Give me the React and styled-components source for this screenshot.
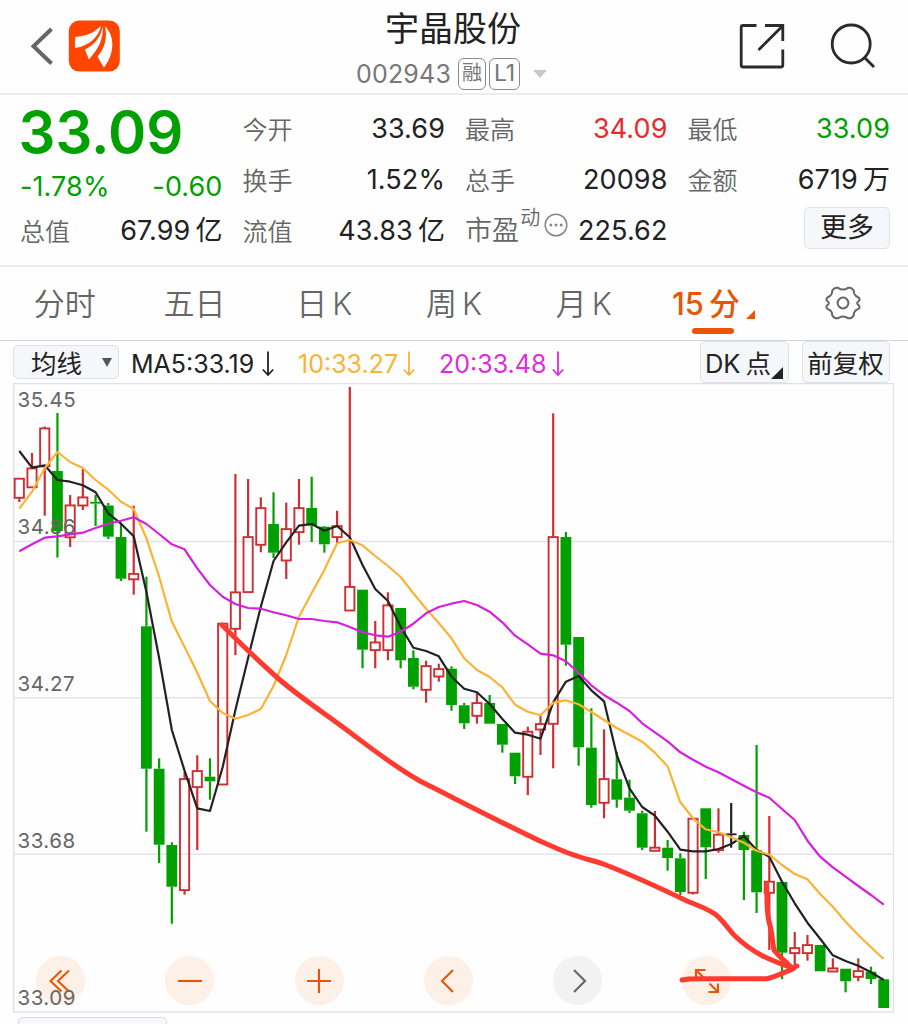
import React from 'react'
import styled, { createGlobalStyle } from 'styled-components'

const GREEN = '#00a000'
const RED = '#e92a2a'
const ORANGE = '#ea5504'
const CANDLE_RED = '#cf2f33'

const GlobalStyle = createGlobalStyle`
  * {
    box-sizing: border-box;
  }
  body {
    margin: 0;
    background: #fefefe;
    font-family: Inter, "Noto Sans CJK SC", sans-serif;
    color: #222;
  }
`

const Page = styled.div`
  width: 908px;
  height: 1024px;
  overflow: hidden;
  display: flex;
  flex-direction: column;
`

const Header = styled.header`
  height: 95px;
  flex: none;
  display: grid;
  grid-template-columns: 260px 1fr 260px;
  border-bottom: 2px solid #ededed;
`

const HeaderSide = styled.div`
  display: flex;
  align-items: flex-start;
  justify-content: ${(p) => (p.$end ? 'flex-end' : 'flex-start')};
  gap: ${(p) => (p.$end ? '43px' : '13px')};
  padding: ${(p) => (p.$end ? '22px 32px 0 0' : '20px 0 0 29px')};
`

const HeaderCenter = styled.div`
  display: flex;
  flex-direction: column;
  align-items: center;
`

const StockName = styled.h1`
  margin: 7px 0 0;
  padding-right: 2px;
  font-size: 34px;
  font-weight: 400;
  line-height: 44px;
  height: 44px;
`

const CodeRow = styled.div`
  display: flex;
  align-items: center;
  gap: 3px;
  height: 45px;
  padding-right: 5px;
  color: #777;
  font-size: 25px;
`

const Code = styled.span`
  letter-spacing: 0.2px;
  margin-right: 4px;
`

const Tag = styled.span`
  width: ${(p) => p.$w}px;
  height: 32px;
  border: 1.5px solid #8a8a8a;
  border-radius: 6px;
  line-height: 29px;
  text-align: center;
  font-size: ${(p) => p.$size}px;
`

const Caret = styled.i`
  margin-left: 10px;
  border: 7.5px solid transparent;
  border-top: 8px solid #c8c8c8;
  border-bottom: 0;
`

const Quote = styled.section`
  height: 172px;
  flex: none;
  display: grid;
  grid-template-columns: repeat(4, 1fr);
  column-gap: 20px;
  padding: 8px 18px 0 20px;
  border-bottom: 2px solid #ededed;
`

const QuoteColumn = styled.div`
  display: flex;
  flex-direction: column;
`

const Cell = styled.div`
  height: ${(p) => p.$h || 51}px;
  display: flex;
  align-items: center;
  justify-content: space-between;
  color: ${(p) => p.$color || '#222'};
  font-size: 27px;
  line-height: 36px;
  letter-spacing: 0.1px;
  white-space: nowrap;
`

const Label = styled.span`
  color: #666;
  font-size: 25px;
  font-weight: 350;
  letter-spacing: 0;
  padding-top: 2px;
`

const Value = styled.span`
  color: ${(p) => p.$color || 'inherit'};
  padding-top: 1px;
`

const Unit = styled.span`
  margin-left: 5px;
`

const Price = styled.div`
  height: 65px;
  margin-left: -1.5px;
  line-height: 59px;
  font-size: 58px;
  font-weight: 600;
  color: ${GREEN};
`

const PeLabel = styled.span`
  display: flex;
  align-items: center;
  color: #666;
  font-size: 27px;
  font-weight: 350;

  svg {
    margin-top: -12px;
  }
`

const Sup = styled.span`
  font-size: 20px;
  margin: -26px 4px 0 1px;
`

const MoreButton = styled.button`
  width: 86px;
  height: 42px;
  margin: -6px 0 0 auto;
  padding: 0;
  border: 1.5px solid #dfe1e6;
  border-radius: 5px;
  background: #f6f7fa;
  font: 400 27px/36px Inter, "Noto Sans CJK SC", sans-serif;
  color: #222;
`

const Tabs = styled.nav`
  height: 74px;
  flex: none;
  display: grid;
  grid-template-columns: repeat(7, 1fr);
  border-bottom: 1.5px solid #d3d4da;
`

const Tab = styled.div`
  display: flex;
  flex-direction: column;
  align-items: center;
  font-size: 31px;
  font-weight: ${(p) => (p.$active ? 450 : 350)};
  color: ${(p) => (p.$active ? ORANGE : '#666')};
`

const TabText = styled.div`
  display: flex;
  gap: 5px;
  height: 61px;
  line-height: 74px;
`

const TabLine = styled.i`
  width: 42px;
  height: 6px;
  border-radius: 3px;
  background: ${ORANGE};
`

const Corner = styled.i`
  align-self: flex-end;
  margin: 0 0 ${(p) => p.$lift}px ${(p) => p.$ml || 0}px;
  border-left: ${(p) => p.$size}px solid transparent;
  border-bottom: ${(p) => p.$size}px solid ${(p) => p.$color};
`

const Indicators = styled.div`
  height: 42px;
  flex: none;
  display: flex;
  align-items: center;
  padding: 0 18px 0 13px;
  font-size: 25px;
`

const Box = styled.div`
  width: ${(p) => p.$w}px;
  height: ${(p) => p.$h}px;
  margin-left: ${(p) => p.$ml || 0}px;
  display: flex;
  align-items: center;
  justify-content: ${(p) => p.$justify || 'center'};
  padding: 0 6px 2px 5px;
  border: 1.5px solid #dfe1e6;
  border-radius: 5px;
  background: #f6f7fa;
  font-size: 25.5px;
  white-space: nowrap;
`

const DownMark = styled.i`
  margin: 2px 0 0 20px;
  border: 5px solid transparent;
  border-top: 9px solid #555;
  border-bottom: 0;
`

const Average = styled.div`
  display: flex;
  align-items: center;
  width: ${(p) => p.$w}px;
  padding-top: 3px;
  color: ${(p) => p.$color};
  white-space: nowrap;

  svg {
    margin-left: auto;
  }
`

const Averages = styled.div`
  display: flex;
  gap: 24px;
  margin-left: 12px;
`

const Spacer = styled.div`
  flex: 1;
`

const ChartPanel = styled.div`
  position: relative;
  width: 881px;
  height: 630px;
  flex: none;
  margin-left: 13px;

  > svg {
    display: block;
  }
`

const Controls = styled.div`
  position: absolute;
  left: 23px;
  bottom: 8px;
  display: flex;
  gap: 80.3px;
`

const RoundButton = styled.div`
  width: 49px;
  height: 49px;
  border-radius: 50%;
  display: flex;
  align-items: center;
  justify-content: center;
  background: ${(p) => (p.$muted ? '#f2f2f2' : 'rgba(252, 226, 207, 0.5)')};
`

const Overlay = styled.svg`
  position: absolute;
  left: 0;
  top: 0;
  pointer-events: none;
`

const NextPanel = styled.div`
  width: 149px;
  height: 30px;
  flex: none;
  margin: 4px 0 0 17.5px;
  border: 1.5px solid #d8dae0;
  border-radius: 5px;
  background: #f6f7fa;
`

// colour, high, body top, body bottom, low
const candles = [
  ['r', 478, 478.3, 498, 502],
  ['r', 453, 468, 487.5, 487.5],
  ['r', 426.5, 428, 466.5, 515.7],
  ['g', 413, 471, 531, 557.5],
  ['r', 495, 505, 537.5, 547],
  ['r', 469, 497, 505.7, 510],
  ['g', 495, 501.8, 503.6, 526],
  ['g', 503, 505.5, 536.7, 539],
  ['g', 524, 537, 578.7, 581],
  ['r', 505.7, 573.5, 579.5, 594.7],
  ['g', 576.7, 626.3, 768.7, 831.7],
  ['g', 758.3, 768.7, 844.7, 863],
  ['g', 842.3, 845, 886.7, 923.7],
  ['r', 772, 778.7, 890.3, 894.7],
  ['r', 755.3, 770.7, 787.3, 850],
  ['g', 758.3, 776.7, 781.3, 799.7],
  ['r', 623.3, 623.3, 784.7, 784.7],
  ['r', 474, 592, 629, 655],
  ['r', 479, 536.7, 592.3, 592.3],
  ['r', 497.3, 507.7, 545, 552.3],
  ['g', 492.3, 524, 552.7, 558],
  ['r', 502.7, 528.7, 560.7, 579],
  ['r', 479, 507.7, 532.3, 544.7],
  ['g', 476.7, 508, 525.7, 542],
  ['g', 526, 526.7, 544.3, 552.7],
  ['r', 510.7, 525.7, 537.3, 543],
  ['r', 387, 586.5, 610.7, 610.7],
  ['g', 589.7, 589.7, 649.7, 668.3],
  ['r', 621, 642, 650.3, 668.3],
  ['r', 592.3, 605, 650.3, 660.3],
  ['g', 608, 608, 660.3, 668.3],
  ['g', 650.3, 658, 686.7, 689.3],
  ['r', 660.7, 665.7, 690, 702.7],
  ['r', 663.7, 668.7, 676.7, 681.7],
  ['g', 666.3, 668.7, 705, 710.7],
  ['g', 703, 705.3, 723.3, 729],
  ['r', 692, 702.7, 716, 723.7],
  ['g', 695, 703, 723.7, 723.7],
  ['g', 724, 724, 744.7, 752.7],
  ['g', 752.7, 752.7, 776.3, 784],
  ['r', 726.7, 731.3, 777, 795],
  ['r', 716, 723.7, 729.7, 755],
  ['r', 413.3, 536.7, 724, 768.3],
  ['g', 532, 537, 644.7, 665.7],
  ['g', 637, 637, 747.3, 765.7],
  ['g', 708.3, 747.7, 805, 807.7],
  ['r', 729.3, 778.7, 803, 818.3],
  ['g', 751.7, 779.3, 799.7, 807.7],
  ['g', 779.7, 797.7, 810.7, 813],
  ['g', 810.7, 813.3, 847.7, 850],
  ['r', 811, 847.3, 851, 851],
  ['g', 840, 847.7, 858, 870.7],
  ['g', 853.3, 858.3, 892, 895],
  ['r', 818.3, 818.3, 893, 894.5],
  ['g', 808.3, 808.3, 847.3, 879],
  ['r', 808.3, 834.3, 850.3, 852.7],
  ['k', 803, 833.4, 835.2, 847.7],
  ['g', 831.7, 835, 850, 900],
  ['g', 745, 850.3, 892.3, 913],
  ['r', 816, 881.3, 893, 950],
  ['g', 882, 882, 952.7, 979],
  ['r', 932, 947.7, 953.3, 966],
  ['r', 935, 944.7, 953.3, 960.7],
  ['g', 945, 945, 971.3, 971.3],
  ['r', 958.3, 968, 971.7, 971.7],
  ['g', 968.7, 968.7, 981.3, 992.3],
  ['r', 958.3, 970.7, 977, 981.3],
  ['g', 966.7, 971.7, 979, 984],
  ['g', 979.3, 979.3, 1008, 1008],
]

const ma5 = [
  451, 467.7, 465.3, 480, 481.7, 485.3, 492.3, 513.3, 523.7, 536.3, 592, 658, 730, 770.7,
  808.3, 811, 767, 710, 658, 606.7, 561, 542.3, 525.7, 524, 530.7, 526, 537.3, 565, 589, 601,
  626.7, 647.7, 651, 656.3, 676.7, 688.7, 692.3, 704, 719, 732.7, 734.7, 738.7, 702.3, 681.7,
  676, 690.3, 701.3, 755, 788.3, 807, 815.7, 831.7, 849.7, 851.3, 851.3, 849, 844, 836, 850,
  856.7, 881.7, 903.3, 922.7, 938.7, 955.3, 961, 965.7, 972.3, 980,
]

const ma10 = [
  508.7, 491.7, 468.3, 452, 462, 468, 480, 489.7, 501.7, 509, 538.3, 576.7, 621.7, 646.7,
  672.7, 701, 713, 718.7, 715, 709, 686, 655, 616.7, 593, 570, 543.3, 540, 545.3, 556, 566,
  577, 593.3, 608.8, 623, 638.3, 658.3, 670, 677, 687.3, 704.7, 711.7, 715.3, 702.7, 700.3,
  704.3, 712, 720, 728, 734.7, 741.7, 752.7, 766.3, 802.3, 818.3, 829.3, 832.3, 837.3, 842.7,
  850.7, 854.7, 865, 874, 879.3, 894, 906.7, 921.7, 935, 947.3, 959,
]

const ma20 = [
  551.3, 544.3, 537.7, 536.3, 534.3, 532.7, 528, 523.7, 520.7, 517.3, 524, 534, 544.3, 549.3,
  568.3, 585, 596.7, 604, 608, 608.7, 612.3, 615.3, 619, 619, 621, 622.3, 627, 632.3, 635.3,
  636.7, 631.7, 623.7, 613.3, 607, 603.7, 601, 605, 611.7, 622.3, 635.7, 644.3, 653.7, 655.3,
  661.3, 672.7, 685.3, 695, 702.7, 711, 723.3, 732.3, 741.3, 752.3, 759.7, 766.7, 772.3, 779,
  785.7, 792.3, 797.7, 809, 820, 840.7, 856.7, 867.3, 876.7, 886, 895, 904.7,
]

const xAt = (i) => 19.3 + i * 12.712
const toPoints = (series) => series.map((y, i) => `${xAt(i)},${y}`).join(' ')

const Candle = ({ x, data }) => {
  const [kind, high, top, bottom, low] = data
  const color = { r: CANDLE_RED, g: GREEN, k: '#222' }[kind]
  return (
    <g stroke={color} strokeWidth="2.2">
      {top > high && <line x1={x} x2={x} y1={high} y2={top} />}
      {low > bottom && <line x1={x} x2={x} y1={bottom} y2={low} />}
      {kind === 'r' ? (
        <rect x={x - 4.6} y={top + 0.4} width="9.2" height={bottom - top - 0.6} fill="none" strokeWidth="1.9" />
      ) : (
        <rect x={x - 5.4} y={top} width="10.8" height={bottom - top} fill={color} stroke="none" />
      )}
    </g>
  )
}

const levels = [
  ['35.45', 406.5],
  ['34.86', 533.5],
  ['34.27', 690.5],
  ['33.68', 848],
  ['33.09', 1004.5],
]

const Chart = () => (
  <svg width="881" height="630" viewBox="13 383 881 630">
    <rect x="13.7" y="383.6" width="879.8" height="628.4" fill="none" stroke="#dfe0e6" strokeWidth="1.3" />
    {[541.5, 697.7, 854.3].map((y) => (
      <line key={y} x1="14" x2="893" y1={y} y2={y} stroke="#e2e4ec" strokeWidth="1.4" />
    ))}
    {candles.map((data, i) => (
      <Candle key={i} x={xAt(i)} data={data} />
    ))}
    <g fill="none" strokeWidth="2.2" strokeLinejoin="round">
      <polyline points={toPoints(ma5)} stroke="#222" />
      <polyline points={toPoints(ma10)} stroke="#fbb335" />
      <polyline points={toPoints(ma20)} stroke="#d620dc" />
    </g>
  </svg>
)

const Annotations = () => (
  <Overlay width="881" height="630" viewBox="13 383 881 630">
    <g fill="#666" fontSize="20.5" letterSpacing="0.5">
      {levels.map(([text, y]) => (
        <text key={text} x="17.5" y={y}>{text}</text>
      ))}
    </g>
    <g fill="none" stroke="#ff3b30" strokeWidth="5" strokeLinecap="round" strokeLinejoin="round">
      <path d="M222 625 C240 643 256 659 280 680 C300 697 321 711 340 725 C366 744 390 764 420 781 C450 796 500 822 540 841 C556 848 566 853 577 856 C588 860 596 861 606 865 C634 876 660 888 687 901 C700 906 708 909 715 914 C723 920 728 929 735 936 C754 954 770 960 792 968" />
      <path d="M766.8 884 C767 900 766.5 912 769 922 C772 930 772 940 774 950 C780 958 787 962 792 968 L797 966" />
      <path d="M682 980 C686 979 694 978.7 700 978.7 L767 978.7 C774 977 780 974 793 969" />
    </g>
  </Overlay>
)

const ControlIcon = ({ d, color = ORANGE }) => (
  <svg width="30" height="30" viewBox="-15 -15 30 30" fill="none" stroke={color} strokeWidth="2.1">
    <path d={d} />
  </svg>
)

const controls = [
  'M0.5 -10.5 L-10.5 0 L0.5 10.5 M8 -10.5 L-3 0 L8 10.5',
  'M-12 0 H12',
  'M-12 0 H12 M0 -12 V12',
  'M5 -11 L-6 0 L5 11',
  'M-4 -11 L7 0 L-4 11',
  'M-11 -2.5 V-11 H-1.5 M-11 -11 L-2 -2 M11 2.5 V11 H1.5 M11 11 L2.5 2.5',
]

const Arrow = () => (
  <svg width="12" height="26" viewBox="0 0 12 26" fill="none" stroke="currentColor" strokeWidth="1.8">
    <path d="M6 0.5 V24 M0.8 18.5 L6 24 L11.2 18.5" />
  </svg>
)

const BackIcon = () => (
  <svg width="26" height="52" viewBox="0 0 26 52" fill="none" stroke="#666" strokeWidth="4">
    <path d="M22.5 9 L4.5 26.3 L22.5 43.5" />
  </svg>
)

const Logo = () => (
  <svg width="52" height="52" viewBox="0 0 52 52">
    <rect x="0.8" y="0.5" width="51" height="51" rx="10.5" fill="#ff4500" />
    <g fill="#fff">
      <path d="M7.5 17 C17 16 27 13 33 5.5 C31 16 22 26 7 28 Q6.5 22 7.5 17Z" />
      <path d="M34.5 6 C36 19 30 29 21 39.5 Q18.5 34 17 29.5 C26 25 33.5 17 34.5 6Z" />
      <path d="M37 6 C47.5 17 46.5 34 36 47.5 Q32 41.5 29.5 36.5 C37 28 39.5 18 37 6Z" />
    </g>
  </svg>
)

const ShareIcon = () => (
  <svg width="48" height="48" viewBox="0 0 48 48" fill="none" stroke="#2b2b2b" strokeWidth="2.8">
    <path d="M18.5 3.5 H5 Q3.2 3.5 3.2 5.5 V43 Q3.2 45 5 45 H43 Q44.8 45 44.8 43 V27.5" />
    <path d="M27 3.5 H44.8 V19 M44.5 4 L20.5 28" />
  </svg>
)

const SearchIcon = () => (
  <svg width="47" height="48" viewBox="0 0 47 48" fill="none" stroke="#2b2b2b" strokeWidth="2.8">
    <circle cx="22.2" cy="22" r="19" />
    <path d="M35.5 35.5 L45 45" />
  </svg>
)

const DotsIcon = () => (
  <svg width="24" height="24" viewBox="0 0 24 24">
    <circle cx="12" cy="12" r="10.8" fill="none" stroke="#888" strokeWidth="1.5" />
    <g fill="#888">
      <circle cx="6.8" cy="12" r="1.5" />
      <circle cx="12" cy="12" r="1.5" />
      <circle cx="17.2" cy="12" r="1.5" />
    </g>
  </svg>
)

const GearIcon = () => (
  <svg width="36" height="72" viewBox="-18 -36 36 72" fill="none" stroke="#666" strokeWidth="2">
    <path d="M-5 -15.2 Q0 -11.8 5 -15.2 Q8.5 -16 10.7 -12.4 Q10.8 -7.3 15 -5.8 Q17.7 -4.3 15.8 -2 Q12.4 0 15.8 2.4 Q17.7 4.6 15 6.2 Q10.8 7.5 10.7 12.4 Q8.5 16 5 15.2 Q0 11.8 -5 15.2 Q-8.5 16 -10.7 12.4 Q-10.8 7.5 -15 6.2 Q-17.7 4.6 -15.8 2.4 Q-12.4 0 -15.8 -2 Q-17.7 -4.3 -15 -5.8 Q-10.8 -7.3 -10.7 -12.4 Q-8.5 -16 -5 -15.2Z" />
    <circle r="5.4" />
  </svg>
)

const App = () => (
  <Page>
    <GlobalStyle />
    <Header>
      <HeaderSide>
        <BackIcon />
        <Logo />
      </HeaderSide>
      <HeaderCenter>
        <StockName>宇晶股份</StockName>
        <CodeRow>
          <Code>002943</Code>
          <Tag $w={28} $size={20}>融</Tag>
          <Tag $w={31} $size={23}>L1</Tag>
          <Caret />
        </CodeRow>
      </HeaderCenter>
      <HeaderSide $end>
        <ShareIcon />
        <SearchIcon />
      </HeaderSide>
    </Header>

    <Quote>
      <QuoteColumn>
        <Price>33.09</Price>
        <Cell $h={37} $color={GREEN}>
          <Value>-1.78%</Value>
          <Value>-0.60</Value>
        </Cell>
        <Cell>
          <Label>总值</Label>
          <Value>67.99<Unit>亿</Unit></Value>
        </Cell>
      </QuoteColumn>
      <QuoteColumn>
        <Cell>
          <Label>今开</Label>
          <Value>33.69</Value>
        </Cell>
        <Cell>
          <Label>换手</Label>
          <Value>1.52%</Value>
        </Cell>
        <Cell>
          <Label>流值</Label>
          <Value>43.83<Unit>亿</Unit></Value>
        </Cell>
      </QuoteColumn>
      <QuoteColumn>
        <Cell>
          <Label>最高</Label>
          <Value $color={RED}>34.09</Value>
        </Cell>
        <Cell>
          <Label>总手</Label>
          <Value>20098</Value>
        </Cell>
        <Cell>
          <PeLabel>
            市盈<Sup>动</Sup>
            <DotsIcon />
          </PeLabel>
          <Value>225.62</Value>
        </Cell>
      </QuoteColumn>
      <QuoteColumn>
        <Cell>
          <Label>最低</Label>
          <Value $color={GREEN}>33.09</Value>
        </Cell>
        <Cell>
          <Label>金额</Label>
          <Value>6719<Unit>万</Unit></Value>
        </Cell>
        <Cell>
          <MoreButton>更多</MoreButton>
        </Cell>
      </QuoteColumn>
    </Quote>

    <Tabs>
      <Tab><TabText>分时</TabText></Tab>
      <Tab><TabText>五日</TabText></Tab>
      <Tab><TabText><span>日</span><span>K</span></TabText></Tab>
      <Tab><TabText><span>周</span><span>K</span></TabText></Tab>
      <Tab><TabText><span>月</span><span>K</span></TabText></Tab>
      <Tab $active>
        <TabText>
          <span>15</span>
          <span>分</span>
          <Corner $size={9} $lift={9} $ml={1} $color={ORANGE} />
        </TabText>
        <TabLine />
      </Tab>
      <Tab><GearIcon /></Tab>
    </Tabs>

    <Indicators>
      <Box $w={106} $h={34} $justify="flex-end">
        均线
        <DownMark />
      </Box>
      <Averages>
        <Average $w={143} $color="#222">MA5:33.19<Arrow /></Average>
        <Average $w={117} $color="#fbb335">10:33.27<Arrow /></Average>
        <Average $w={125} $color="#de2be2">20:33.48<Arrow /></Average>
      </Averages>
      <Spacer />
      <Box $w={89} $h={42}>
        <span>DK<Unit>点</Unit></span>
        <Corner $size={12} $lift={1} $color="#222" />
      </Box>
      <Box $w={88} $h={42} $ml={13}>前复权</Box>
    </Indicators>

    <ChartPanel>
      <Chart />
      <Controls>
        {controls.map((d, i) => (
          <RoundButton key={d} $muted={i === 4}>
            <ControlIcon d={d} color={i === 4 ? '#666' : ORANGE} />
          </RoundButton>
        ))}
      </Controls>
      <Annotations />
    </ChartPanel>
    <NextPanel />
  </Page>
)

export default App
